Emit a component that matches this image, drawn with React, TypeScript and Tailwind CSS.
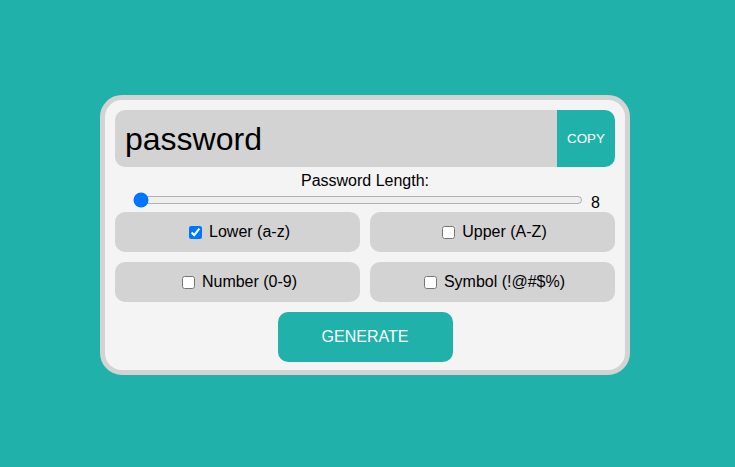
import { useState } from "react";

const options = [
  { id: "lower", label: "Lower (a-z)" },
  { id: "upper", label: "Upper (A-Z)" },
  { id: "number", label: "Number (0-9)" },
  { id: "symbol", label: "Symbol (!@#$%)" },
];

const App = () => {
  const [length, setLength] = useState(8);
  const [checked, setChecked] = useState<Record<string, boolean>>({ lower: true });

  return (
    <div className="min-h-screen bg-[#20b2aa] pt-[95px] pl-[100px] font-['Liberation_Sans',Arial,sans-serif] text-black">
      <div className="w-[530px] h-[280px] rounded-[22px] border-[5px] border-[#d3d3d3] bg-[#f4f4f4] px-[10px] pt-[10px]">
        {/* PASSWORD + COPY */}
        <div className="flex h-[57px]">
          <div className="flex-1 flex items-center rounded-l-[10px] bg-[#d3d3d3] pl-[10px] text-[32px] leading-none">
            password
          </div>
          <button className="w-[58px] rounded-r-[10px] bg-[#20b2aa] text-[13.33px] text-white">COPY</button>
        </div>

        {/* LENGTH */}
        <div className="h-[45px] pt-[5px] text-center text-base">
          <div className="leading-[18px]">Password Length:</div>
          <div className="flex justify-center items-end h-[20px] gap-[8px] pl-[4px]">
            <input
              type="range"
              min={8}
              max={32}
              value={length}
              onChange={(e) => setLength(Number(e.target.value))}
              className="w-[450px] h-[16px] mb-[2px] accent-[#0075ff]"
            />
            <span className="leading-[18px] -mb-[2px] w-[10px] text-left">{length}</span>
          </div>
        </div>

        {/* OPTIONS */}
        <div className="grid grid-cols-2 gap-[10px]">
          {options.map((o) => (
            <label
              key={o.id}
              className="flex h-[40px] items-center justify-center gap-[7px] rounded-[10px] bg-[#d3d3d3] pl-[4px] text-base cursor-pointer"
            >
              <input
                type="checkbox"
                checked={!!checked[o.id]}
                onChange={() => setChecked((p) => ({ ...p, [o.id]: !p[o.id] }))}
                className="w-[13px] h-[13px] accent-[#0075ff]"
              />
              {o.label}
            </label>
          ))}
        </div>

        <div className="flex justify-center pt-[10px]">
          <button className="w-[175px] h-[50px] rounded-[10px] bg-[#20b2aa] text-base text-white">GENERATE</button>
        </div>
      </div>
    </div>
  );
};

export default App;
